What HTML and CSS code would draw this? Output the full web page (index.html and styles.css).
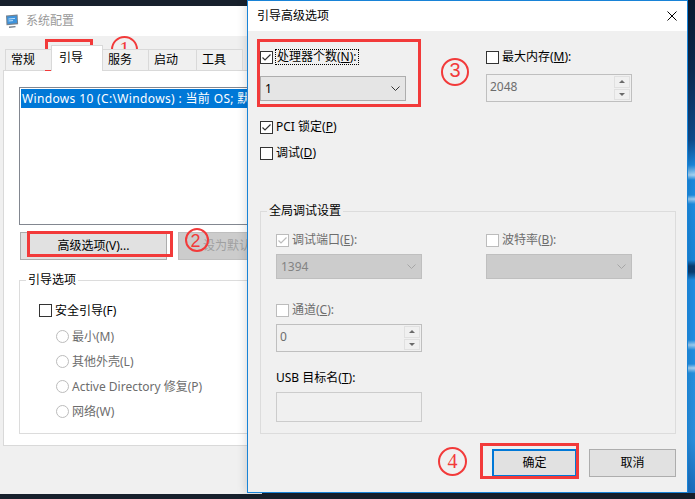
FILE: index.html
```html
<!DOCTYPE html>
<html lang="zh-CN">
<head>
  <meta charset="UTF-8" />
  <title>系统配置 - 引导高级选项</title>
  <link rel="stylesheet" href="styles.css">
</head>
<body>
<div class="desktop">

  <!-- back window: msconfig -->
  <div class="win msconfig">
    <div class="titlebar">
      <svg class="app-icon" width="14" height="14" viewBox="0 0 14 14">
        <path d="M1 1.6 L12.6 0.6 L13.1 10.2 L1.5 11.2 Z" fill="#75808c"/>
        <path d="M2.1 2.6 L11.7 1.8 L12.1 9.1 L2.5 9.9 Z" fill="#3d93dc"/>
        <path d="M3.5 5 L10 4.4" stroke="#bfe0fa" stroke-width="1"/>
        <path d="M3.6 7 L8 6.6" stroke="#bfe0fa" stroke-width="1"/>
        <path d="M4 13.2 L10.5 12.6" stroke="#75808c" stroke-width="1.4"/>
      </svg>
      <span class="title">系统配置</span>
    </div>

    <div class="tabs">
      <div class="tab w47">常规</div>
      <div class="tab active">引导</div>
      <div class="tab w47">服务</div>
      <div class="tab w49">启动</div>
      <div class="tab w47">工具</div>
    </div>

    <div class="tab-panel">
      <div class="listbox">
        <div class="list-item selected">Windows 10 (C:\Windows) : 当前 OS; 默认 OS</div>
      </div>

      <div class="button-row">
        <div class="button advanced">高级选项(V)...</div>
        <div class="button set-default disabled">设为默认(D)</div>
      </div>

      <fieldset class="group boot-options">
        <legend>引导选项</legend>
        <div class="group-inner">
          <div class="opt row25 safe"><span class="check"></span>安全引导(F)</div>
          <div class="opt row25 sub disabled"><span class="radio"></span>最小(M)</div>
          <div class="opt row25 sub disabled"><span class="radio"></span>其他外壳(L)</div>
          <div class="opt row25 sub disabled"><span class="radio"></span>Active Directory 修复(P)</div>
          <div class="opt row25 sub disabled"><span class="radio"></span>网络(W)</div>
        </div>
      </fieldset>
    </div>
  </div>

  <!-- front window: advanced boot options -->
  <div class="win dialog">
    <div class="titlebar">
      <span class="title">引导高级选项</span>
      <svg class="close" width="10" height="10" viewBox="0 0 10 10">
        <path d="M0.5 0.5 L9.5 9.5 M9.5 0.5 L0.5 9.5" stroke="#000" stroke-width="1"/>
      </svg>
    </div>

    <div class="dialog-body">
      <div class="cols top-cols">
        <div class="col">
          <div class="opt">
            <span class="check on"><svg viewBox="0 0 11 11"><path d="M1.5 5.5 L4 8 L9.5 2.5"/></svg></span>
            <span class="focus">处理器个数(<u>N</u>):</span>
          </div>
          <div class="combo cpu">
            <span class="value">1</span>
            <svg class="chev" width="9" height="5" viewBox="0 0 9 5"><path d="M0.5 0.5 L4.5 4.5 L8.5 0.5"/></svg>
          </div>
        </div>
        <div class="col">
          <div class="opt"><span class="check"></span>最大内存(<u>M</u>):</div>
          <div class="spin mem">
            <span class="value">2048</span>
            <div class="spin-btns"><i class="up"></i><i class="down"></i></div>
          </div>
        </div>
      </div>

      <div class="opt pci">
        <span class="check on"><svg viewBox="0 0 11 11"><path d="M1.5 5.5 L4 8 L9.5 2.5"/></svg></span>PCI 锁定(<u>P</u>)
      </div>
      <div class="opt debug"><span class="check"></span>调试(<u>D</u>)</div>

      <fieldset class="group debug-settings">
        <legend>全局调试设置</legend>
        <div class="group-inner">
          <div class="cols">
            <div class="col">
              <div class="opt disabled">
                <span class="check on"><svg viewBox="0 0 11 11"><path d="M1.5 5.5 L4 8 L9.5 2.5"/></svg></span>调试端口(<u>E</u>):
              </div>
              <div class="combo disabled">
                <span class="value">1394</span>
                <svg class="chev" width="9" height="5" viewBox="0 0 9 5"><path d="M0.5 0.5 L4.5 4.5 L8.5 0.5"/></svg>
              </div>
            </div>
            <div class="col">
              <div class="opt disabled"><span class="check"></span>波特率(<u>B</u>):</div>
              <div class="combo disabled">
                <span class="value"></span>
                <svg class="chev" width="9" height="5" viewBox="0 0 9 5"><path d="M0.5 0.5 L4.5 4.5 L8.5 0.5"/></svg>
              </div>
            </div>
          </div>

          <div class="opt disabled channel"><span class="check"></span>通道(<u>C</u>):</div>
          <div class="spin chan">
            <span class="value">0</span>
            <div class="spin-btns"><i class="up"></i><i class="down"></i></div>
          </div>

          <div class="label usb">USB 目标名(<u>T</u>):</div>
          <div class="textbox"></div>
        </div>
      </fieldset>

      <div class="dialog-buttons">
        <div class="button default">确定</div>
        <div class="button cancel">取消</div>
      </div>
    </div>
  </div>

  <!-- red annotations drawn over the screenshot -->
  <div class="mark m1"></div>
  <div class="mark m2"></div>
  <div class="mark m3"></div>
  <div class="mark m4"></div>

  <div class="ring r1"><span>1</span></div>
  <div class="ring r2"><span>2</span></div>
  <div class="ring r3"><span>3</span></div>
  <div class="ring r4"><span>4</span></div>

</div>
</body>
</html>
```

FILE: styles.css
```css
* {
  box-sizing: border-box;
}

body {
  margin: 0;
  font-family: "Noto Sans", "Noto Sans CJK SC", sans-serif;
  font-size: 12px;
  line-height: 16px;
  color: #000;
}

.desktop {
  position: relative;
  width: 695px;
  height: 499px;
  overflow: hidden;
  background:
    linear-gradient(to bottom,
      #0a1a30 0px, #0c2b52 70px, #0f4d8f 140px, #1a88de 165px,
      #a9d6f7 175px, #1b8ae0 180px, #1c8de2 195px, #9fd0f5 199px,
      #1d8de2 204px, #1a87dc 260px, #0a3e73 266px, #0a3e73 272px,
      #1f8fe6 280px, #1f8fe6 340px, #9ecff4 345px, #2190e4 350px,
      #2190e4 364px, #a8d4f5 368px, #2592e2 373px, #2a90e0 440px,
      #1b6fc0 490px) right top / 7px 493px no-repeat,
    #17202c;
}

/* ---------- windows ---------- */
.win {
  position: absolute;
  background: #f0f0f0;
}

.msconfig {
  left: 0;
  top: 6px;
  width: 262px;
  height: 488px;
  overflow: hidden;
}

.titlebar {
  height: 30px;
  background: #fff;
  display: flex;
  align-items: center;
}

.msconfig .titlebar {
  padding-left: 5px;
}

.msconfig .title {
  margin-left: 7px;
  color: #999;
}

.tabs {
  position: relative;
  z-index: 1;
  display: flex;
  align-items: flex-end;
  height: 25px;
  margin-top: 9px;
  padding-left: 5px;
}

.tab {
  height: 21px;
  border: 1px solid #d9d9d9;
  border-bottom: 0;
  margin-left: -1px;
  padding-left: 5px;
  line-height: 19px;
  background: #f0f0f0;
  white-space: nowrap;
}

.tab:first-child { margin-left: 0; }
.tab.w47 { width: 47px; }
.tab.w49 { width: 49px; }

.tab.active {
  width: 52px;
  height: 26px;
  margin-bottom: -1px;
  padding-left: 7px;
  line-height: 24px;
  background: #fff;
}

.tab-panel {
  width: 300px;
  margin-left: 3px;
  padding: 16px 0 11px 15px;
  background: #fff;
  border: 1px solid #d9d9d9;
}

.listbox {
  height: 138px;
  padding: 1px;
  border: 1px solid #828790;
}

.list-item {
  height: 19px;
  padding-left: 1px;
  line-height: 19px;
  white-space: nowrap;
  overflow: hidden;
}

.list-item.selected {
  background: #0078d7;
  color: #fff;
  letter-spacing: 0.35px;
}

.button-row {
  display: flex;
  gap: 11px;
  margin-top: 7px;
}

.button {
  height: 28px;
  display: flex;
  align-items: center;
  justify-content: center;
  border: 1px solid #adadad;
  background: #e1e1e1;
  white-space: nowrap;
}

.button.advanced {
  width: 147px;
  margin-left: 1px;
}

.button.set-default {
  width: 114px;
}

.button.disabled {
  background: #cccccc;
  border-color: #bfbfbf;
  color: #a0a0a0;
}

/* ---------- group boxes ---------- */
.group {
  margin: 0;
  padding: 0;
  border: 1px solid #dcdcdc;
  min-width: 0;
}

.group legend {
  margin-left: 6px;
  padding: 0 2px;
  line-height: 16px;
}

.boot-options {
  margin-top: 12px;
  padding-bottom: 9px;
}

.boot-options .group-inner {
  padding: 10px 0 0 19px;
}

/* ---------- checkbox / radio rows ---------- */
.opt {
  display: flex;
  align-items: center;
  height: 16px;
  white-space: nowrap;
}

.opt.row25 {
  height: 25px;
}

.opt.safe {
  margin-bottom: 1px;
}

.opt.sub {
  margin-left: 17px;
}

.opt.disabled {
  color: #6d6d6d;
}

.check {
  flex: none;
  width: 13px;
  height: 13px;
  margin-right: 3px;
  border: 1px solid #333;
  background: #fff;
}

.check svg {
  display: block;
  width: 11px;
  height: 11px;
  fill: none;
  stroke: #333;
  stroke-width: 1.2;
}

.opt.disabled .check {
  border-color: #bcbcbc;
}

.opt.disabled .check svg {
  stroke: #bcbcbc;
}

.radio {
  flex: none;
  width: 13px;
  height: 13px;
  margin-right: 3px;
  border: 1px solid #bcbcbc;
  border-radius: 50%;
  background: #fff;
}

.focus {
  margin-left: -1px;
  padding: 0 1px;
  line-height: 14px;
  border: 1px dotted #000;
}

u {
  text-decoration: underline;
  text-underline-offset: 1px;
}

/* ---------- dialog ---------- */
.dialog {
  left: 247px;
  top: 0;
  width: 441px;
  height: 493px;
  border: 1px solid #1883d7;
  box-shadow: 0 0 10px rgba(0, 0, 0, 0.18);
}

.dialog .titlebar {
  padding-left: 9px;
}

.dialog .close {
  margin-left: auto;
  margin-right: 10px;
}

.dialog-body {
  padding: 18px 0 0 12px;
}

.cols {
  display: grid;
  grid-template-columns: 226px 226px;
  align-items: start;
}

.combo {
  width: 146px;
  height: 25px;
  display: flex;
  align-items: center;
  padding: 0 5px 0 4px;
  border: 1px solid #adadad;
  background: #e5e5e5;
}

.combo .value {
  flex: 1;
}

.chev path {
  fill: none;
  stroke: #333;
  stroke-width: 1;
}

.combo.cpu {
  margin-top: 11px;
}

.combo.disabled {
  margin-top: 6px;
  border-color: #bfbfbf;
  background: #cccccc;
  color: #838383;
}

.combo.disabled .chev path {
  stroke: #a6a6a6;
}

.spin {
  width: 146px;
  height: 28px;
  display: flex;
  align-items: center;
  padding-left: 3px;
  border: 1px solid #bfbfbf;
  background: #f0f0f0;
  color: #6d6d6d;
}

.spin .value {
  flex: 1;
  margin-top: -2px;
}

.spin-btns {
  align-self: stretch;
  width: 16px;
  margin: 1px 1px 1px 0;
  display: flex;
  flex-direction: column;
  gap: 1px;
}

.spin-btns i {
  flex: 1;
  display: flex;
  align-items: center;
  justify-content: center;
  border: 1px solid #e0e0e0;
  background: #f0f0f0;
}

.spin-btns i::after {
  content: "";
  border-left: 3px solid transparent;
  border-right: 3px solid transparent;
}

.spin-btns .up::after {
  border-bottom: 3px solid #6a6a6a;
}

.spin-btns .down::after {
  border-top: 3px solid #6a6a6a;
}

.spin.mem {
  margin-top: 9px;
}

.opt.pci {
  margin-top: 17px;
}

.opt.debug {
  margin-top: 10px;
}

.debug-settings {
  width: 416px;
  margin-top: 42px;
  padding-bottom: 11px;
}

.debug-settings .group-inner {
  padding: 13px 0 0 15px;
}

.debug-settings .cols {
  grid-template-columns: 210px 210px;
}

.opt.channel {
  margin-top: 23px;
}

.spin.chan {
  margin-top: 6px;
}

.label.usb {
  margin-top: 18px;
  height: 16px;
}

.textbox {
  width: 146px;
  height: 30px;
  margin-top: 6px;
  border: 1px solid #cccccc;
  background: #f0f0f0;
}

.dialog-buttons {
  display: flex;
  justify-content: flex-end;
  gap: 12px;
  margin-top: 15px;
  padding-right: 11px;
}

.button.default {
  width: 85px;
  border: 2px solid #0078d7;
}

.button.cancel {
  width: 87px;
}

/* ---------- red annotations ---------- */
.mark {
  position: absolute;
  border: 3px solid #f23a3a;
}

.m1 { left: 45px;  top: 39px;  width: 48px;  height: 32px; }
.m2 { left: 27px;  top: 231px; width: 146px; height: 26px; }
.m3 { left: 257px; top: 39px;  width: 164px; height: 68px; }
.m4 { left: 480px; top: 443px; width: 99px;  height: 36px; }

.ring {
  position: absolute;
  display: flex;
  align-items: center;
  justify-content: center;
  border: 2px solid #f23a3a;
  border-radius: 50%;
  color: #f23a3a;
  line-height: 1;
}

.r1 { left: 111px; top: 36px;  width: 27px; height: 27px; font: 21px "Liberation Serif", serif; }
.r2 { left: 185px; top: 228px; width: 24px; height: 24px; font: 18px "Liberation Sans", sans-serif; }
.r3 { left: 441px; top: 58px;  width: 28px; height: 28px; font: 20px "Liberation Sans", sans-serif; }
.r4 { left: 438px; top: 447px; width: 29px; height: 29px; font: 20px "Liberation Serif", serif; }

.r1 span { margin-top: 0; }
.r2 span { margin-top: 3px; margin-left: -3px; }
.r3 span { margin-top: -3px; }
```
